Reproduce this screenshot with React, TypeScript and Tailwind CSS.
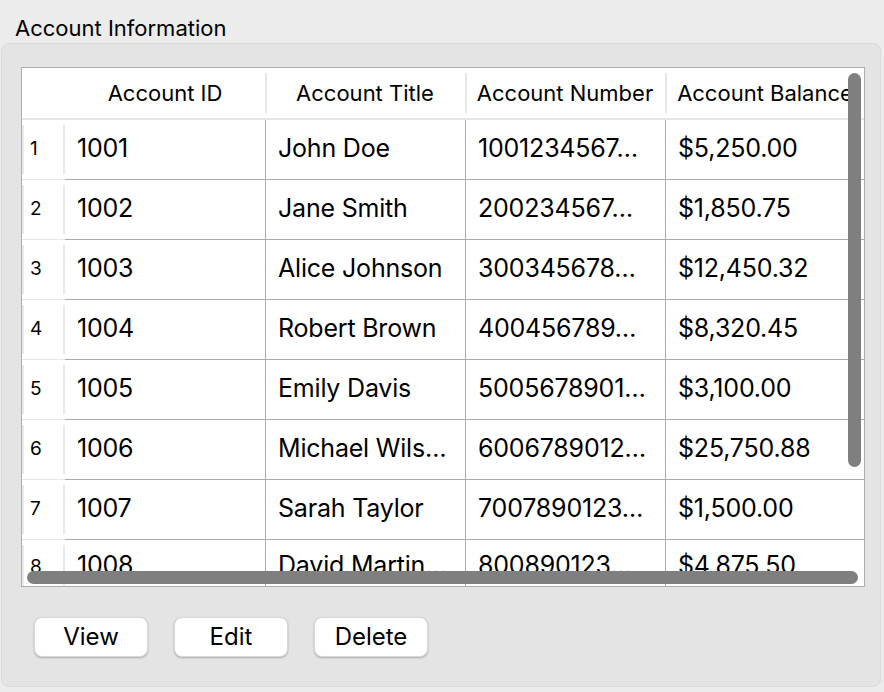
import React from "react";

interface Account {
  id: string;
  title: string;
  number: string;
  balance: string;
}

const accounts: Account[] = [
  { id: "1001", title: "John Doe", number: "1001234567…", balance: "$5,250.00" },
  { id: "1002", title: "Jane Smith", number: "200234567…", balance: "$1,850.75" },
  { id: "1003", title: "Alice Johnson", number: "300345678…", balance: "$12,450.32" },
  { id: "1004", title: "Robert Brown", number: "400456789…", balance: "$8,320.45" },
  { id: "1005", title: "Emily Davis", number: "5005678901…", balance: "$3,100.00" },
  { id: "1006", title: "Michael Wils…", number: "6006789012…", balance: "$25,750.88" },
  { id: "1007", title: "Sarah Taylor", number: "7007890123…", balance: "$1,500.00" },
  { id: "1008", title: "David Martin…", number: "800890123…", balance: "$4,875.50" },
];

const headers = ["Account ID", "Account Title", "Account Number", "Account Balance"];

export default function App() {
  return (
    <div
      className="w-[884px] h-[692px] bg-[#ececec] text-black overflow-hidden"
      style={{ fontFamily: "Inter, 'Liberation Sans', sans-serif" }}
    >
      <div className="pl-[15px] pt-[13px] h-[43px] text-[22px] leading-[30px]">Account Information</div>

      <div className="ml-[1px] w-[880px] h-[644px] rounded-[8px] bg-[#e4e4e4] border border-[#dadada] pt-[23px] px-[19px]">
        {/* table */}
        <div className="relative w-[844px] h-[520px] bg-white border border-[#aeaeae] overflow-hidden">
          {/* header */}
          <div className="flex h-[52px] border-b-2 border-[#e6e6e6]">
            <div className="w-[43px] shrink-0" />
            {headers.map((h, i) => (
              <div key={h} className="w-[200px] shrink-0 flex items-center justify-center relative text-[22px] whitespace-nowrap">
                {i > 0 && <div className="absolute left-0 top-[5px] bottom-[5px] w-[2px] bg-[#e6e6e6]" />}
                {h}
              </div>
            ))}
          </div>

          {accounts.map((a, i) => {
            const last = i === accounts.length - 1;
            return (
              <div key={a.id} className={`flex ${last ? "h-[54px]" : "h-[60px]"}`}>
                <div className={`w-[43px] shrink-0 py-[5px] ${last ? "" : "border-b border-[#e6e6e6]"}`}>
                  <div className="h-full border-l-2 border-r-2 border-[#e9e9e9] flex items-center pl-[6px] text-[19px]">
                    {i + 1}
                  </div>
                </div>
                {[a.id, a.title, a.number, a.balance].map((v, j) => (
                  <div
                    key={j}
                    className={`w-[200px] shrink-0 flex items-center pl-[12px] pb-[2px] text-[25px] tracking-[-0.2px] whitespace-nowrap ${
                      last ? "" : "border-b border-[#ababab]"
                    } ${j > 0 ? "border-l border-[#ababab]" : ""}`}
                  >
                    {v}
                  </div>
                ))}
              </div>
            );
          })}

          {/* overlay scrollbars */}
          <div className="absolute left-[826px] top-[5px] w-[13px] h-[394px] rounded-full bg-[#7f7f7f]" />
          <div className="absolute left-[5px] top-[503px] w-[831px] h-[13px] rounded-full bg-[#7f7f7f]" />
        </div>

        <div className="flex gap-[26px] pl-[13px] pt-[30px]">
          {["View", "Edit", "Delete"].map((b) => (
            <button
              key={b}
              className="w-[114px] h-[40px] rounded-[8px] bg-white text-[24px] leading-none shadow-[0_1px_2px_rgba(0,0,0,0.25)] border border-[#d8d8d8]"
            >
              {b}
            </button>
          ))}
        </div>
      </div>
    </div>
  );
}
